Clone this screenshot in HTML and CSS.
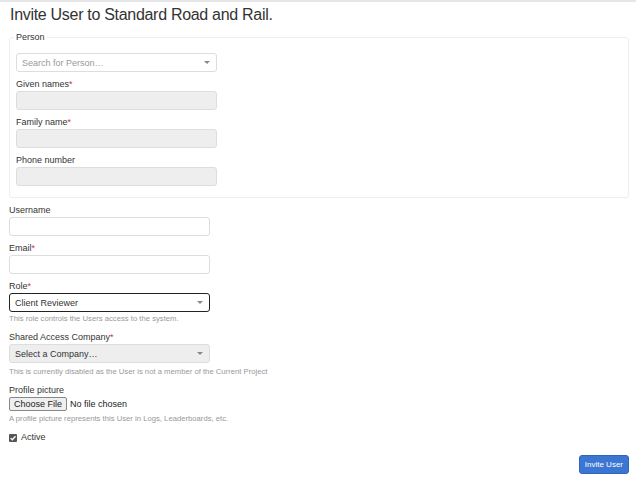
FILE: index.html
```html
<!DOCTYPE html>
<html>
<head>
  <title>Invite User</title>
  <link rel="stylesheet" href="styles.css">
</head>
<body>
  <div class="page">
    <h1 class="title">Invite User to Standard Road and Rail.</h1>

    <form class="invite-form">
      <!-- Person -->
      <fieldset class="person">
        <legend>Person</legend>
        <div class="select search">
          <span class="placeholder">Search for Person…</span>
          <span class="caret"></span>
        </div>

        <label class="lbl">Given names<span class="req">*</span></label>
        <div class="input disabled"></div>

        <label class="lbl">Family name<span class="req">*</span></label>
        <div class="input disabled"></div>

        <label class="lbl">Phone number</label>
        <div class="input disabled last"></div>
      </fieldset>

      <!-- User -->
      <label class="lbl">Username</label>
      <div class="input"></div>

      <label class="lbl">Email<span class="req">*</span></label>
      <div class="input"></div>

      <label class="lbl">Role<span class="req">*</span></label>
      <div class="select focused">
        <span class="value">Client Reviewer</span>
        <span class="caret"></span>
      </div>
      <p class="help">This role controls the Users access to the system.</p>

      <label class="lbl">Shared Access Company<span class="req">*</span></label>
      <div class="select disabled">
        <span class="value">Select a Company…</span>
        <span class="caret"></span>
      </div>
      <p class="help">This is currently disabled as the User is not a member of the Current Project</p>

      <label class="lbl">Profile picture</label>
      <div class="file">
        <span class="file-btn">Choose File</span>
        <span class="file-name">No file chosen</span>
      </div>
      <p class="help short">A profile picture represents this User in Logs, Leaderboards, etc.</p>

      <label class="check">
        <span class="box">
          <svg width="8" height="8" viewBox="0 0 8 8"><path d="M1.6 4.1 L3.3 5.8 L6.5 2.2" fill="none" stroke="#fff" stroke-width="1.3"/></svg>
        </span>
        Active
      </label>

      <div class="actions">
        <span class="btn">Invite User</span>
      </div>
    </form>
  </div>
</body>
</html>
```

FILE: styles.css
```css
/* base */
body {
  margin: 0;
  font-family: "Liberation Sans", Arial, sans-serif;
  color: #333;
  background: #fff;
  border-top: 2px solid #e6e6e6;
}

.page {
  padding: 0 7px 0 9px;
}

.title {
  font-size: 16px;
  letter-spacing: -0.3px;
  font-weight: normal;
  margin: 3px 0 6px 1px;
  line-height: 20px;
}

/* fieldset */
.person {
  border: 1px solid #eee;
  border-radius: 3px;
  margin: 0;
  padding: 10px 6px 11px 6px;
}

.person legend {
  font-size: 9px;
  line-height: 12px;
  padding: 0 2px;
  margin-left: -2px;
}

/* labels & fields */
.lbl {
  display: block;
  font-size: 9px;
  line-height: 11px;
  margin: 0 0 1px 0;
}

.person + .lbl {
  margin-top: 7px;
}

.req {
  color: #c33;
}

.input, .select {
  box-sizing: border-box;
  width: 201px;
  height: 19px;
  border: 1px solid #ddd;
  border-radius: 3px;
  background: #fff;
  margin-bottom: 7px;
}

.input.last {
  margin-bottom: 0;
}

.input.disabled, .select.disabled {
  background: #eee;
}

.select {
  display: flex;
  align-items: center;
  justify-content: space-between;
  padding: 0 6px 0 5px;
  font-size: 9px;
}

.select .placeholder {
  color: #999;
}

.select .value {
  color: #333;
}

.select.focused {
  border: 1px solid #222;
  margin-bottom: 2px;
}

.select.disabled {
  margin-bottom: 4px;
}

.caret {
  width: 0;
  height: 0;
  border-left: 3px solid transparent;
  border-right: 3px solid transparent;
  border-top: 3px solid #888;
}

.help {
  font-size: 7.7px;
  color: #999;
  margin: 0 0 8px 0;
  line-height: 10px;
}

/* file input */
.file {
  display: flex;
  align-items: center;
  gap: 3px;
  font-size: 9px;
  margin-bottom: 3px;
}

.file-btn {
  box-sizing: border-box;
  height: 14px;
  border: 1px solid #888;
  background: #efefef;
  border-radius: 2px;
  padding: 0 4px;
  line-height: 12px;
  color: #222;
}

.file-name {
  color: #222;
}

/* checkbox */
.check {
  display: flex;
  align-items: center;
  gap: 4px;
  font-size: 9px;
  line-height: 11px;
}

.box {
  width: 8px;
  height: 8px;
  background: #555;
  border-radius: 1px;
  display: flex;
}

/* button */
.actions {
  display: flex;
  justify-content: flex-end;
  margin-top: 12px;
}

.btn {
  box-sizing: border-box;
  height: 19px;
  line-height: 17px;
  background: #3b77d2;
  color: #fff;
  font-size: 8px;
  padding: 0 5px;
  border-radius: 3px;
  border: 1px solid #2f66bb;
}
```
